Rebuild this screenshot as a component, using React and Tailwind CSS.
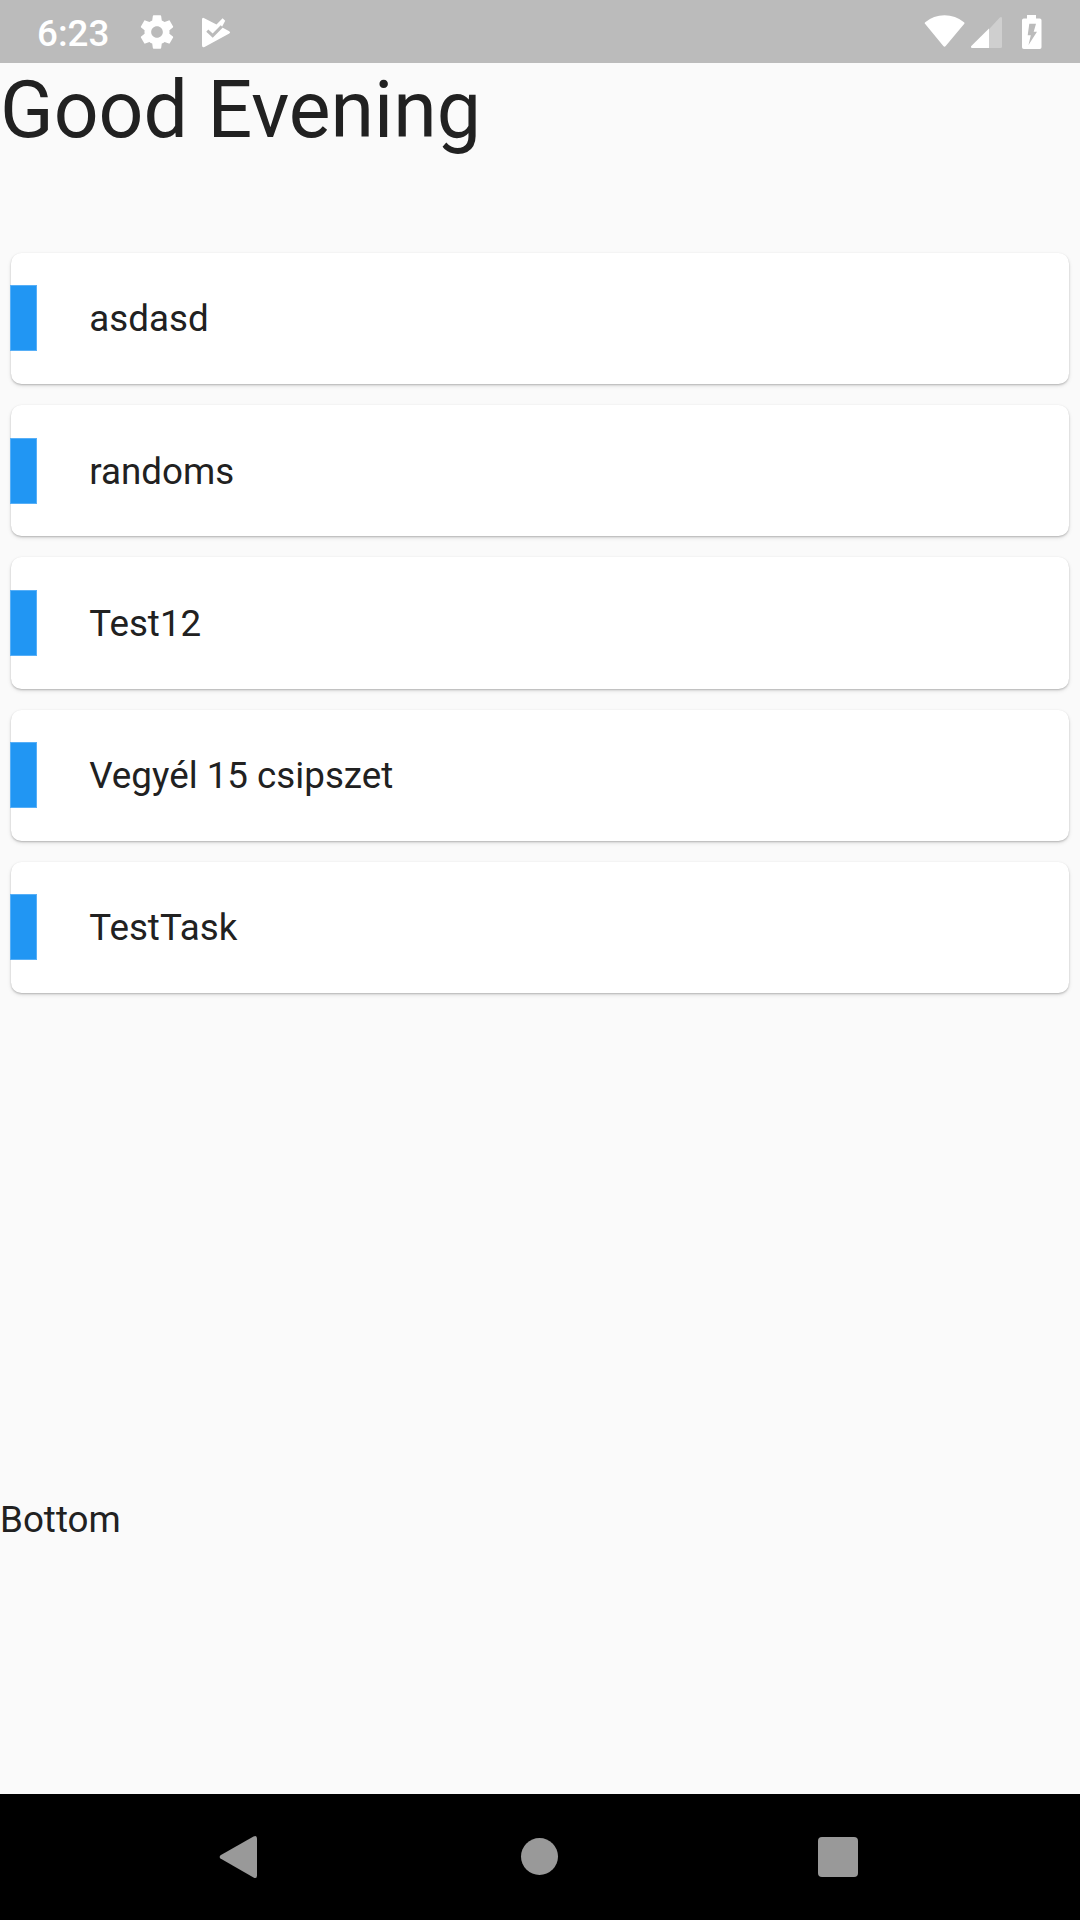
const tasks = ["asdasd", "randoms", "Test12", "Vegyél 15 csipszet", "TestTask"];

function StatusBar() {
  return (
    <header className="flex h-[63px] shrink-0 items-center bg-[#bbbbbb] text-white">
      <span className="ml-[37px] mt-[3px] w-[74px] text-[36.75px] leading-[43px] font-medium">6:23</span>
      <svg className="ml-[26px] size-[40px]" viewBox="0 0 24 24" fill="currentColor">
        <path d="M19.43 12.98c.04-.32.07-.64.07-.98s-.03-.66-.07-.98l2.11-1.65c.19-.15.24-.42.12-.64l-2-3.46c-.12-.22-.39-.3-.61-.22l-2.49 1c-.52-.4-1.08-.73-1.69-.98l-.38-2.65C14.46 2.18 14.25 2 14 2h-4c-.25 0-.46.18-.49.42l-.38 2.65c-.61.25-1.17.59-1.69.98l-2.49-1c-.23-.09-.49 0-.61.22l-2 3.46c-.13.22-.07.49.12.64l2.11 1.65c-.04.32-.07.65-.07.98s.03.66.07.98l-2.11 1.65c-.19.15-.24.42-.12.64l2 3.46c.12.22.39.3.61.22l2.49-1c.52.4 1.08.73 1.69.98l.38 2.65c.03.24.24.42.49.42h4c.25 0 .46-.18.49-.42l.38-2.65c.61-.25 1.17-.59 1.69-.98l2.49 1c.23.09.49 0 .61-.22l2-3.46c.12-.22.07-.49-.12-.64l-2.11-1.65zM12 15.5c-1.93 0-3.500-1.570-3.500-3.500s1.570-3.500 3.500-3.500 3.500 1.570 3.500 3.500-1.570 3.500-3.500 3.500z" />
      </svg>
      <svg className="ml-[23px] size-[32px]" viewBox="200 15 32 32" fill="currentColor">
        <path d="M202 18.500Q202 16 204.300 17.200L216.500 23.600L222.600 17.300L225.200 19.700L221.800 26.300L229.300 30.200Q231 31.400 229.300 32.600L204.500 45.900Q202 47 202 44.200Z" />
        <path d="M207.300 29.600L212.700 34.600L221.800 25.400" fill="none" stroke="#bbbbbb" strokeWidth="3" />
      </svg>
      <div className="ml-auto mr-[38px] flex items-center">
        <svg className="h-[34px] w-[42px]" viewBox="924 14 42 34" fill="currentColor">
          <path d="M924.800 22.600Q924.300 21.900 925.200 21.200Q933.500 14.200 944.500 14.200Q955.500 14.200 964 21.200Q965 21.900 964.300 22.700L945.700 45Q944.500 46.300 943.300 45Z" />
        </svg>
        <svg className="ml-[5px] h-[34px] w-[31px]" viewBox="971 14 31 34" fill="currentColor">
          <path d="M989 28.300L999.800 16.600Q1002 14.800 1002 17.500V45.500Q1002 47 1000.500 47H989Z" opacity=".3" />
          <path d="M989 27.500V47H972.200Q970 46.700 971.300 44.900Z" />
        </svg>
        <svg className="ml-[20px] h-[34px] w-[20px]" viewBox="1022 14 20 34">
          <path fill="currentColor" d="M1027 14H1036V17.500H1039.800Q1041.500 17.500 1041.500 19.300V46.200Q1041.500 48 1039.800 48H1023.800Q1022 48 1022 46.200V19.300Q1022 17.500 1023.800 17.500H1027Z" />
          <path fill="#bbbbbb" d="M1029.300 22.700H1036L1033.700 30.700H1037L1028.500 44L1030.800 34.300H1027.700Z" />
        </svg>
      </div>
    </header>
  );
}

function TaskCard({ title }) {
  return (
    <li className="mx-[11px] flex h-[131.25px] items-center rounded-[10.5px] bg-white shadow-[0_1px_2px_rgba(0,0,0,0.22),0_2px_4px_rgba(0,0,0,0.1)]">
      <span className="-ml-px h-[66px] w-[27px] border border-[#57aff7] bg-[#2196f3]" />
      <span className="mt-[0.9px] ml-[52.25px]">{title}</span>
    </li>
  );
}

function NavigationBar() {
  return (
    <nav className="flex h-[126px] shrink-0 items-center justify-between bg-black pl-[219px] pr-[222px] text-[#999999]">
      <svg className="h-[44px] w-[38px]" viewBox="219 1835 38 44" fill="currentColor">
        <path d="M220.500 1855.200L253.500 1836.500Q257 1834.800 257 1838.500V1875.500Q257 1879.200 253.500 1877.500L220.500 1858.600Q218.800 1857 220.500 1855.200Z" />
      </svg>
      <span className="mb-px ml-[3px] size-[37px] rounded-full bg-current" />
      <span className="size-[40px] rounded-[4px] bg-current" />
    </nav>
  );
}

export default function App() {
  return (
    <div className="flex h-[1920px] w-[1080px] flex-col bg-[#fafafa] font-['Roboto',sans-serif] text-[36.75px] leading-[43px] text-[#212121]">
      <StatusBar />
      <main className="flex flex-1 flex-col">
        <h1 className="h-[189.75px] pt-px text-[78.75px] leading-[92px]">Good Evening</h1>
        <ul className="flex flex-1 flex-col gap-[21px]">
          {tasks.map((task) => (
            <TaskCard key={task} title={task} />
          ))}
        </ul>
        <p className="h-[296px]">Bottom</p>
      </main>
      <NavigationBar />
    </div>
  );
}
